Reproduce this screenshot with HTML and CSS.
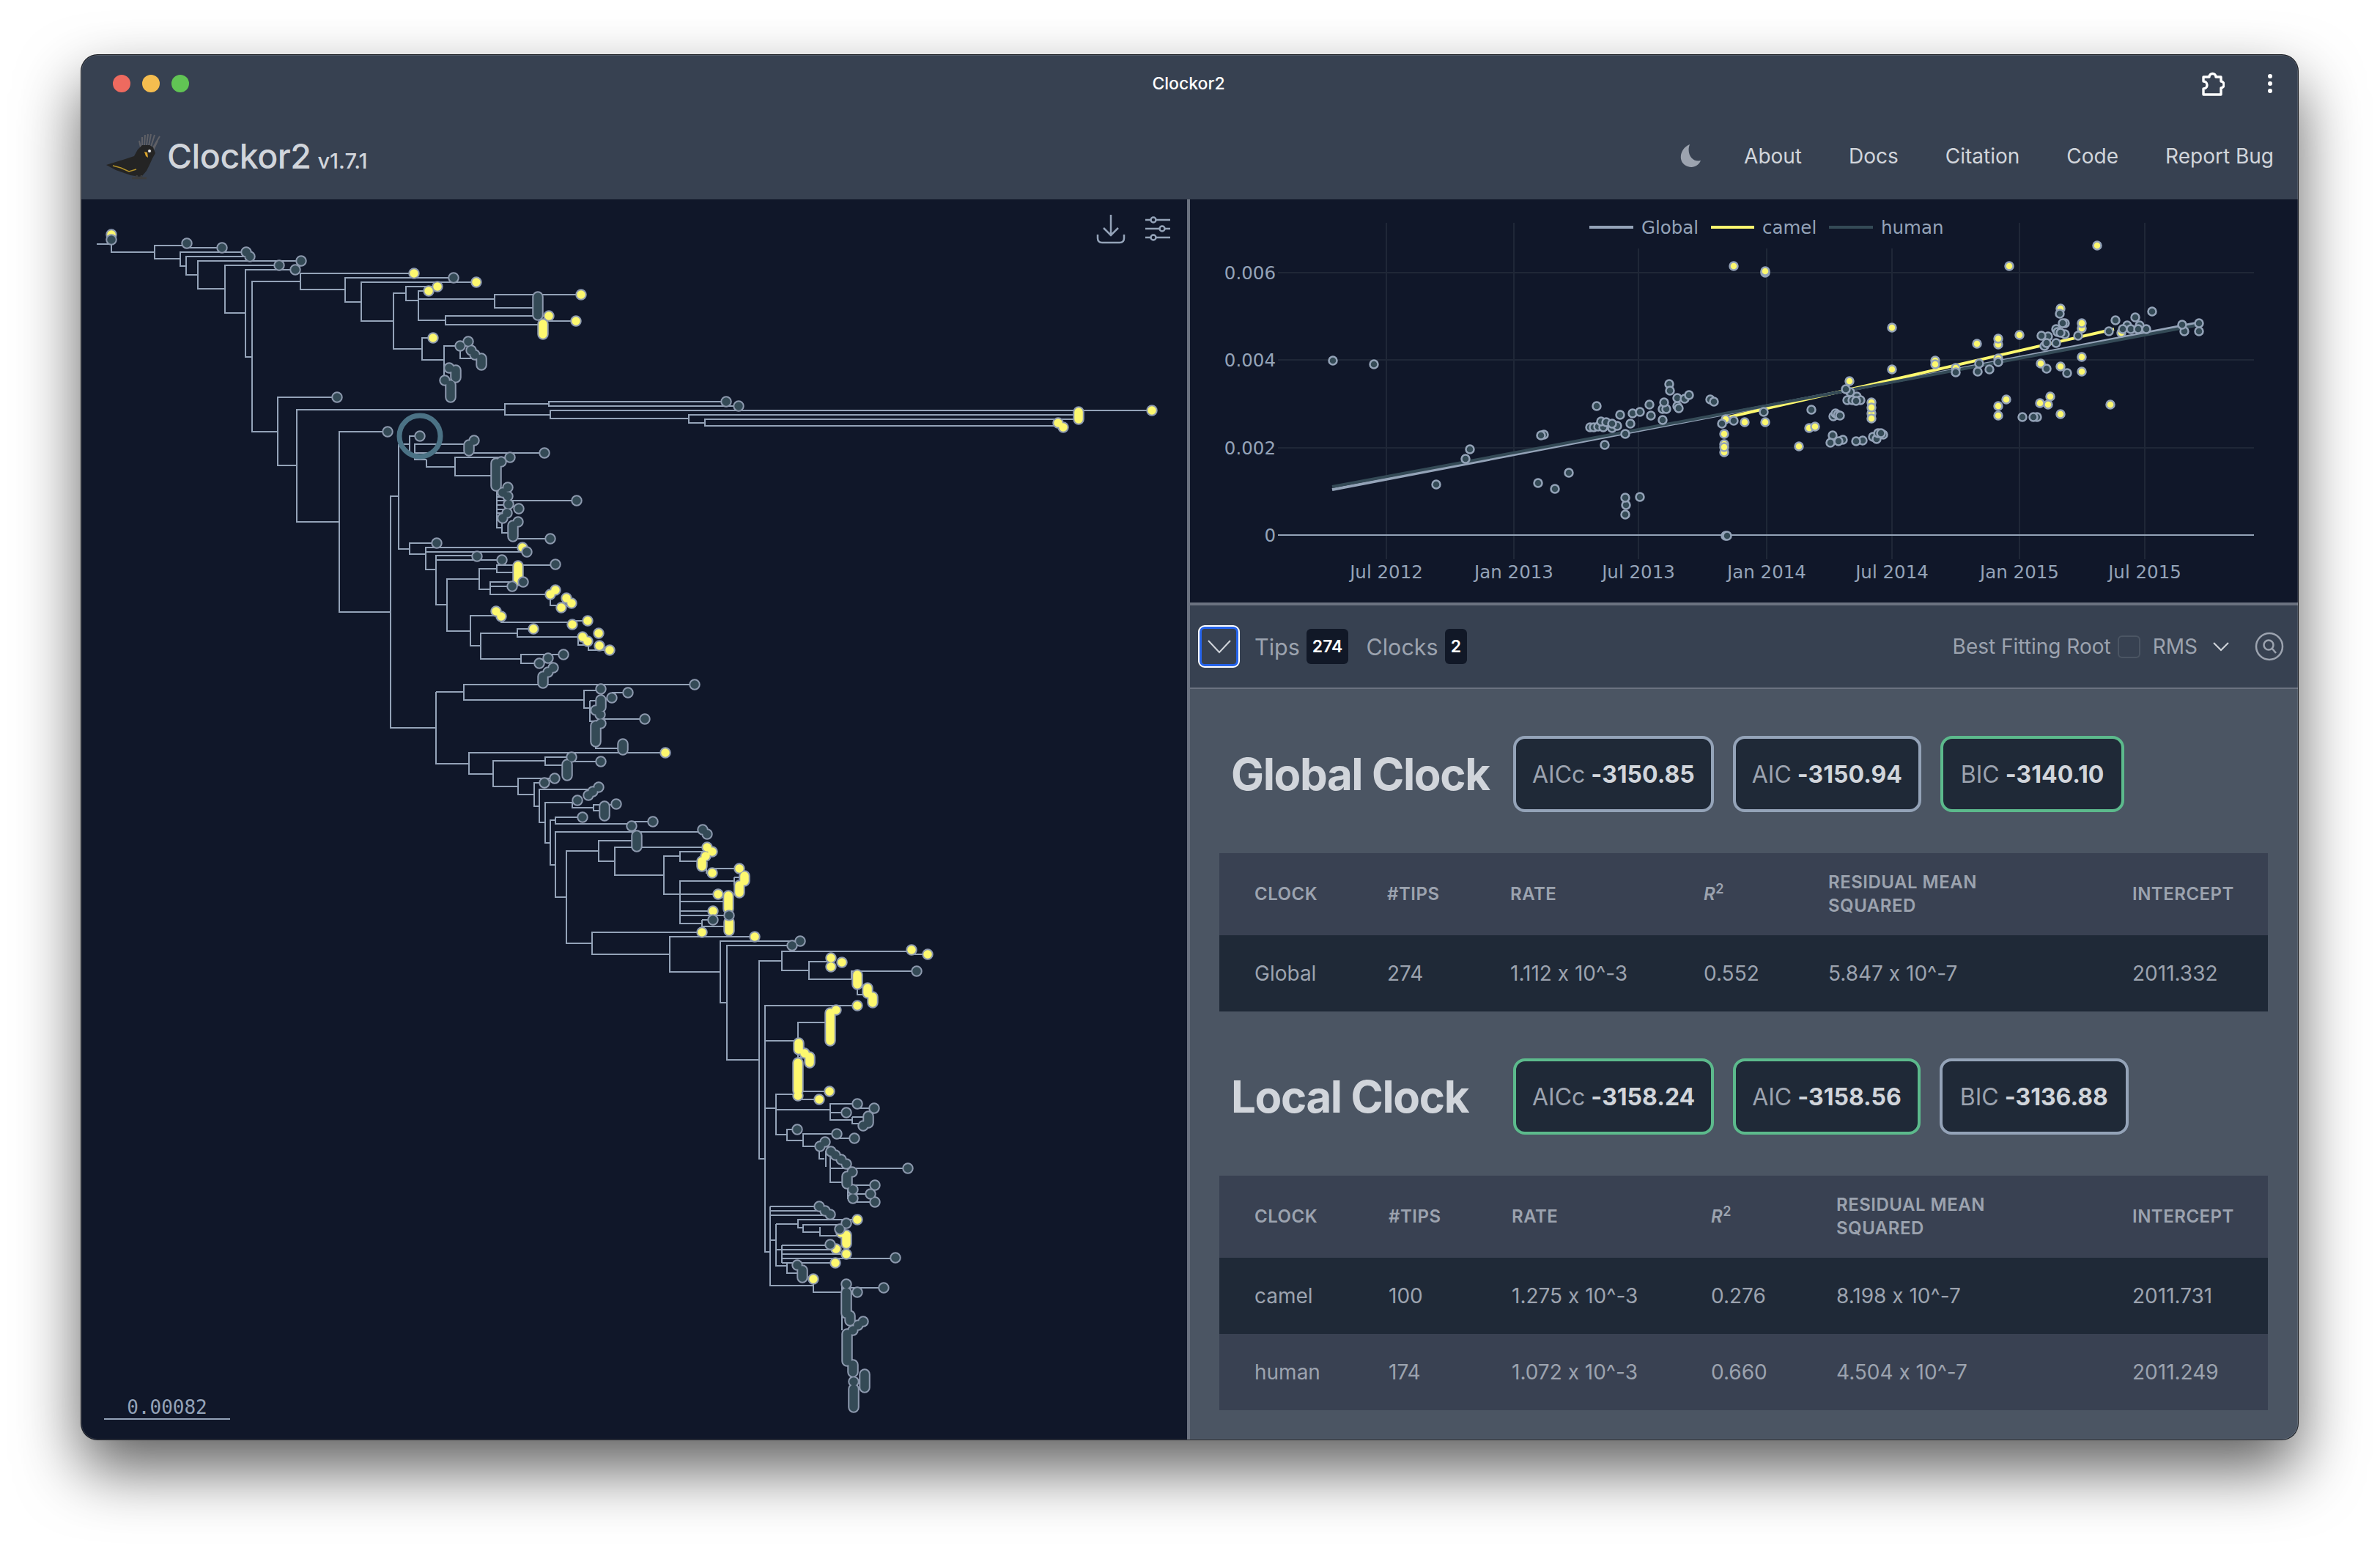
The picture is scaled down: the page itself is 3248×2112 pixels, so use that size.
FILE: index.html
```html
<!DOCTYPE html>
<html lang="en">
<head>
    <meta charset="UTF-8" />
    <title>Clockor2</title>
    <link rel="stylesheet" href="styles.css">
</head>
<body>

<div class="window">

    <div class="titlebar">
        <div class="lights">
            <span class="light red"></span>
            <span class="light amber"></span>
            <span class="light green"></span>
        </div>
        <div class="win-title">Clockor2</div>
        <div class="win-actions">
            <svg class="puzzle" width="32" height="36" viewBox="0 0 32 36">
                <path d="M3 9H11a4.500 4.500 0 0 1 9 0H27V15a4 4.500 0 0 1 0 9V33H3V25a5 5 0 0 0 0-10Z" />
            </svg>
            <div class="kebab"><span></span><span></span><span></span></div>
        </div>
    </div>

    <nav class="navbar">
        <div class="brand">
            <svg width="74" height="64" viewBox="145 180 74 64">
                <path class="bird-crest" d="M192 200L190 191M194 198L194 186M197 197L198 183M200 197L202 182M203 198L206 182M206 199L211 183M208 202L218 185M209 204L215 191" />
                <path class="bird-body" d="M145 224L171 216L183 212L188 203L194 197L204 197L209 200L212 208L208 215L204 224L200 232L194 239L190 240L178 238L158 231Z" />
                <path class="bird-feet" d="M180 242H200M187 238L186 242M193 238L193 242" />
                <path class="bird-wing" d="M154 225L165 228L176 233L186 230" />
                <path class="bird-beak" d="M197 206L201 207L202 214L199 212Z" />
                <circle class="bird-eye" cx="204" cy="205" r="2.500" />
            </svg>
            <span class="brand-name">Clockor2</span>
            <span class="brand-version">v1.7.1</span>
        </div>
        <div class="nav-links">
            <svg class="moon" width="32" height="32" viewBox="0 0 32 32">
                <path d="M16 0C3 5-2 24 13 30C21 33 28 29 31 22C20 25 11 13 16 0Z" />
            </svg>
            <a>About</a>
            <a>Docs</a>
            <a>Citation</a>
            <a>Code</a>
            <a>Report Bug</a>
        </div>
    </nav>

    <div class="panels">

        <div class="tree-panel">
            <svg class="tree" width="1508" height="1692" viewBox="112 272 1508 1692">
                <defs>
                    <path id="yellow-tips" d="M152 320h0M565 373h0M597 391h0M585 397h0M650 385h0M793 402h0M749 431h0M786 438h0M741 442V456M591 461h0M1572 560h0M1472 562V572M1444 577h0M1451 583h0M713 747h0M707 772V792M758 805h0M751 811h0M773 816h0M780 823h0M766 829h0M677 834h0M684 841h0M781 852h0M802 847h0M728 858h0M795 869h0M802 875h0M817 864h0M818 881h0M832 887h0M908 1027h0M965 1156h0M972 1162h0M963 1168h0M958 1175V1182M972 1191h0M1009 1185h0M1016 1195V1202M1009 1208V1218M980 1220h0M994 1222V1240M973 1243h0M995 1258V1270M958 1272h0M1030 1278h0M1244 1296h0M1266 1302h0M1134 1307h0M1134 1319h0M1149 1313h0M1170 1330V1343M1184 1348V1355M1191 1360V1368M1170 1372h0M1141 1378h0M1133 1382V1420M1090 1423V1432M1098 1437h0M1105 1442V1450M1089 1450V1488M1089 1495h0M1132 1489h0M1118 1500h0M1170 1664h0M1148 1682h0M1155 1685V1697M1141 1704h0M1155 1711h0M1140 1723h0M1110 1745h0" />
                    <path id="dark-tips" d="M152 327h0M255 332h0M303 338h0M336 344h0M341 350h0M411 356h0M381 362h0M403 368h0M619 379h0M734 405V430M628 472h0M639 466h0M643 478h0M648 484h0M657 489V498M613 502h0M622 505V515M607 519h0M615 525V542M460 542h0M991 548h0M1008 554h0M529 589h0M573 595h0M647 601h0M640 607V615M743 618h0M696 624h0M684 630h0M677 632V663M693 665h0M686 672h0M693 677h0M787 683h0M694 688h0M708 694h0M692 700h0M686 707h0M707 712h0M700 717V732M751 735h0M596 741h0M719 753h0M651 759h0M685 764h0M758 770h0M714 794h0M699 800h0M769 893h0M748 898h0M736 905h0M755 911h0M748 917h0M741 923V932M948 934h0M820 940h0M835 952h0M857 945h0M820 955V965M813 969h0M819 975h0M880 981h0M820 987h0M813 990V1012M850 1015V1023M780 1033h0M820 1039h0M774 1043V1058M757 1062h0M743 1068h0M817 1074h0M809 1080h0M803 1085h0M788 1092h0M841 1097h0M825 1100V1113M795 1115h0M891 1121h0M862 1127h0M959 1132h0M965 1138h0M869 1140V1155M995 1249h0M973 1255h0M1092 1284h0M1081 1290h0M1251 1325h0M1155 1518h0M1170 1506h0M1193 1512h0M1185 1523V1532M1178 1536h0M1088 1541h0M1142 1547h0M1166 1553h0M1126 1558h0M1119 1564h0M1134 1571h0M1140 1576h0M1148 1582h0M1155 1588h0M1239 1594h0M1163 1599h0M1156 1605V1615M1194 1617h0M1164 1623h0M1188 1629h0M1164 1635h0M1194 1640h0M1118 1646h0M1126 1652h0M1133 1657h0M1155 1669h0M1146 1677h0M1133 1698h0M1222 1716h0M1088 1726h0M1095 1733V1743M1155 1752h0M1206 1757h0M1170 1763h0M1155 1763V1792M1160 1795V1802M1178 1803h0M1171 1808h0M1164 1815h0M1156 1820V1857M1164 1862V1872M1180 1875V1893M1165 1885h0M1165 1895V1920" />
                </defs>

                <path class="branch" d="M132 333H152M152 320V344H211M255 335H211V353H246M255 338H303M330 344H246V363H254M335 350H254V375H270M411 356H270V394H307M381 362H307V427H335M403 368H335V487H344M410 384H344V589H379M565 373H410V395H471M619 379H471V412H493M650 385H493V438H537M554 400H537V476H576M597 391H554V410H571M585 397H571V437H608M571 408H675M793 402H675V420H734M749 431H608V443H741M786 438H749M591 461H576V491H606M628 472H606V522M628 472V489H657" />
                <path class="branch" d="M460 542H379V635H405M689 559H405V712H463M749 551H689V566H751M991 548H749V554H1008M1572 560H751V571H940M1472 566H940V577H962M1472 572H962V581H1440M529 589H463V835H533M544 677H533V993H595M573 595H559V616M544 606H559M544 606V749H559M642 606H566V627H582M743 618H566M582 627V637H621M696 624H621V649H677M678 663V720H685M678 678H687M678 689H687M678 695H687M678 700H687M685 700V727H700M787 683H678M751 735H700" />
                <path class="branch" d="M596 741H559V756H581M714 747H581V777H595M719 753H581M651 758H595V825H610M685 764H595M654 790H610V861H642M678 776H654V804H669M758 771H678V781H707M714 794H669V811H751M699 800H669M751 811V826H765M677 840H642V881H656M684 841V849H781M781 847H802M706 864H656V899H711M728 858H706V869H789M789 869V880H803V887H832M769 893H711V905H736" />
                <path class="branch" d="M948 934H633V955H797M595 944H633M595 944V1042H640M820 942H797V966H805M857 945H835M805 956V984H813M805 956H820M880 981H819M813 990V1021H850M908 1027H640V1056H673M744 1038H673V1073H707M780 1033H744V1044H774M820 1039H780M757 1062H707V1084H729M743 1068H729V1100H736M806 1077H736V1122H744M781 1095H744V1150H751M781 1095V1102H810M841 1098H810V1106H825M758 1119H751V1180H758M795 1115H758V1124H862M891 1121H862M959 1135H758V1224H773M817 1161H773V1287H808M869 1147H817V1175H839M965 1156H839V1194H906M928 1168H906V1220H928M972 1162H928V1175H958M964 1180V1191H972M1009 1185H972M1002 1202H928V1260H958M1002 1197V1208M1016 1197H1002M1009 1208H1002M980 1220H928M994 1230H928M973 1243H929M995 1249H929M958 1255V1264H995M973 1255H958" />
                <path class="branch" d="M958 1272H808V1302H914M1030 1278H914V1326H983M1092 1284H983V1368H992M1081 1290H992V1446H1036M1067 1311H1036V1581H1043M1244 1298H1067V1324H1104M1266 1302H1244M1134 1312H1104V1336H1162M1251 1325H1162V1336M1170 1343V1357H1185M1170 1372H1044V1708H1051M1044 1420H1089V1395H1133M1089 1432V1443H1105M1044 1512H1059M1089 1493H1059V1548H1074M1132 1489H1089M1118 1500H1089M1133 1514H1059M1170 1506H1133V1528H1163M1193 1512H1170M1155 1518H1133M1163 1524V1533H1178M1163 1524H1185M1088 1541H1074V1556H1096M1142 1547H1096V1564H1119M1166 1553H1142M1118 1564V1581H1125M1127 1570V1592M1133 1571V1613H1157M1239 1594H1133M1157 1613V1635H1164M1194 1617H1164M1188 1629H1164M1194 1640H1164M1164 1617V1640" />
                <path class="branch" d="M1118 1646H1051M1126 1652H1051M1133 1658H1051M1051 1646V1754H1110M1170 1664H1089V1675H1096M1059 1670H1089M1059 1670V1727H1074M1051 1692H1059M1146 1671H1096V1681H1119M1119 1674V1686H1155M1067 1699V1723M1133 1699H1067M1141 1705H1059M1155 1711H1067M1222 1717H1067M1140 1723H1067M1089 1723H1074V1737H1096M1110 1746V1763H1149M1149 1752V1815M1206 1757H1155" />

                <use href="#yellow-tips" class="tip-edge" />
                <use href="#yellow-tips" class="tip-yellow" />
                <use href="#dark-tips" class="tip-edge" />
                <use href="#dark-tips" class="tip-dark" />

                <circle class="root-ring" cx="573" cy="595" r="28" />

                <!-- download and settings -->
                <path class="tool-icon" d="M1516 293V322M1506 311L1516 321L1526 311M1498 320V325Q1498 331 1504 331H1528Q1534 331 1534 325V320" />
                <path class="tool-icon" d="M1563 300H1597M1563 312H1597M1563 324H1597" />
                <circle class="tool-knob" cx="1574" cy="300" r="3.500" />
                <circle class="tool-knob" cx="1586" cy="312" r="3.500" />
                <circle class="tool-knob" cx="1574" cy="324" r="3.500" />

                <text class="scale-label" x="228" y="1929" text-anchor="middle">0.00082</text>
                <path class="branch" d="M142 1936H314" />
            </svg>
        </div>

        <div class="side">

            <div class="plot">
                <svg width="1512" height="550" viewBox="1624 272 1512 550">
                    <path class="grid" d="M1744 372H3076M1744 491H3076M1744 611H3076" />
                    <path class="grid" d="M1892 304V763M2066 304V763M2236 339V763M2411 339V763M2582 339V763M2756 304V763M2927 304V763" />
                    <path class="zero" d="M1744 730H3076" />

                    <text class="axis" x="1741" y="381" text-anchor="end">0.006</text>
                    <text class="axis" x="1741" y="500" text-anchor="end">0.004</text>
                    <text class="axis" x="1741" y="620" text-anchor="end">0.002</text>
                    <text class="axis" x="1741" y="739" text-anchor="end">0</text>
                    <text class="axis" x="1892" y="789" text-anchor="middle">Jul 2012</text>
                    <text class="axis" x="2066" y="789" text-anchor="middle">Jan 2013</text>
                    <text class="axis" x="2236" y="789" text-anchor="middle">Jul 2013</text>
                    <text class="axis" x="2411" y="789" text-anchor="middle">Jan 2014</text>
                    <text class="axis" x="2582" y="789" text-anchor="middle">Jul 2014</text>
                    <text class="axis" x="2756" y="789" text-anchor="middle">Jan 2015</text>
                    <text class="axis" x="2927" y="789" text-anchor="middle">Jul 2015</text>

                    <path class="fit fit-global" d="M2169 310H2229M1818 668L2997 441" />
                    <path class="fit fit-camel" d="M2335 310H2394M2355 570L2885 449" />
                    <path class="fit fit-human" d="M2496 310H2556M1818 664L2997 444" />
                    <text class="axis" x="2240" y="319">Global</text>
                    <text class="axis" x="2405" y="319">camel</text>
                    <text class="axis" x="2567" y="319">human</text>

                    <g class="pts-yellow">
                        <circle cx="2366" cy="363"/><circle cx="2409" cy="372"/><circle cx="2409" cy="370"/><circle cx="2381" cy="576"/><circle cx="2409" cy="576"/><circle cx="2355" cy="572"/><circle cx="2353" cy="617"/><circle cx="2353" cy="606"/><circle cx="2353" cy="610"/><circle cx="2353" cy="592"/>
                        <circle cx="2862" cy="335"/><circle cx="2742" cy="363"/><circle cx="2582" cy="447"/><circle cx="2582" cy="504"/><circle cx="2524" cy="520"/><circle cx="2698" cy="469"/><circle cx="2727" cy="470"/><circle cx="2727" cy="462"/><circle cx="2756" cy="457"/><circle cx="2812" cy="421"/><circle cx="2841" cy="448"/><circle cx="2841" cy="441"/><circle cx="2841" cy="487"/><circle cx="2841" cy="507"/><circle cx="2641" cy="492"/><circle cx="2641" cy="497"/><circle cx="2669" cy="502"/><circle cx="2727" cy="489"/><circle cx="2785" cy="496"/><circle cx="2812" cy="500"/><circle cx="2738" cy="545"/><circle cx="2727" cy="554"/><circle cx="2727" cy="567"/><circle cx="2784" cy="550"/><circle cx="2798" cy="541"/><circle cx="2795" cy="552"/><circle cx="2812" cy="565"/><circle cx="2880" cy="552"/><circle cx="2554" cy="549"/><circle cx="2554" cy="564"/><circle cx="2554" cy="556"/><circle cx="2554" cy="571"/><circle cx="2469" cy="584"/><circle cx="2477" cy="582"/><circle cx="2455" cy="609"/><circle cx="2895" cy="454"/>
                    </g>
                    <g class="pts-dark">
                        <circle cx="1819" cy="492"/><circle cx="1875" cy="497"/><circle cx="1960" cy="661"/><circle cx="2000" cy="626"/><circle cx="2006" cy="613"/><circle cx="2107" cy="593"/><circle cx="2103" cy="594"/><circle cx="2099" cy="659"/><circle cx="2122" cy="667"/><circle cx="2141" cy="645"/><circle cx="2179" cy="554"/><circle cx="2190" cy="607"/><circle cx="2218" cy="592"/><circle cx="2218" cy="702"/><circle cx="2219" cy="689"/><circle cx="2218" cy="679"/><circle cx="2238" cy="678"/><circle cx="2170" cy="583"/><circle cx="2175" cy="583"/><circle cx="2181" cy="582"/><circle cx="2188" cy="583"/><circle cx="2185" cy="575"/><circle cx="2200" cy="584"/><circle cx="2207" cy="581"/><circle cx="2192" cy="576"/><circle cx="2200" cy="578"/><circle cx="2211" cy="566"/><circle cx="2225" cy="578"/><circle cx="2228" cy="564"/><circle cx="2238" cy="562"/><circle cx="2253" cy="567"/><circle cx="2251" cy="552"/><circle cx="2269" cy="573"/><circle cx="2269" cy="558"/><circle cx="2274" cy="558"/><circle cx="2271" cy="549"/><circle cx="2278" cy="524"/><circle cx="2279" cy="533"/><circle cx="2289" cy="554"/><circle cx="2291" cy="557"/><circle cx="2289" cy="543"/><circle cx="2299" cy="544"/><circle cx="2305" cy="539"/><circle cx="2334" cy="545"/><circle cx="2339" cy="548"/><circle cx="2350" cy="578"/><circle cx="2366" cy="574"/><circle cx="2407" cy="562"/><circle cx="2355" cy="731"/><circle cx="2357" cy="731"/>
                        <circle cx="2472" cy="559"/><circle cx="2525" cy="535"/><circle cx="2534" cy="541"/><circle cx="2521" cy="546"/><circle cx="2539" cy="546"/><circle cx="2528" cy="546"/><circle cx="2533" cy="547"/><circle cx="2519" cy="531"/><circle cx="2502" cy="568"/><circle cx="2505" cy="564"/><circle cx="2508" cy="566"/><circle cx="2511" cy="567"/><circle cx="2501" cy="594"/><circle cx="2498" cy="604"/><circle cx="2515" cy="600"/><circle cx="2509" cy="602"/><circle cx="2542" cy="601"/><circle cx="2533" cy="602"/><circle cx="2556" cy="596"/><circle cx="2561" cy="599"/><circle cx="2570" cy="593"/><circle cx="2563" cy="591"/><circle cx="2567" cy="591"/><circle cx="2669" cy="508"/><circle cx="2699" cy="507"/><circle cx="2715" cy="504"/><circle cx="2727" cy="494"/><circle cx="2701" cy="496"/><circle cx="2780" cy="569"/><circle cx="2760" cy="569"/><circle cx="2775" cy="569"/><circle cx="2793" cy="503"/><circle cx="2821" cy="509"/>
                        <circle cx="2818" cy="441"/><circle cx="2815" cy="441"/><circle cx="2806" cy="449"/><circle cx="2818" cy="456"/><circle cx="2808" cy="453"/><circle cx="2812" cy="454"/><circle cx="2795" cy="459"/><circle cx="2786" cy="458"/><circle cx="2790" cy="472"/><circle cx="2793" cy="468"/><circle cx="2806" cy="468"/><circle cx="2811" cy="428"/><circle cx="2836" cy="458"/><circle cx="2887" cy="437"/><circle cx="2878" cy="452"/><circle cx="2903" cy="444"/><circle cx="2920" cy="444"/><circle cx="2897" cy="449"/><circle cx="2908" cy="449"/><circle cx="2918" cy="449"/><circle cx="2929" cy="449"/><circle cx="2914" cy="433"/><circle cx="2937" cy="425"/><circle cx="2981" cy="452"/><circle cx="2978" cy="443"/><circle cx="3001" cy="452"/><circle cx="3001" cy="441"/>
                    </g>
                </svg>
            </div>

            <div class="toolbar">
                <div class="tool-group">
                    <button class="collapse">
                        <svg width="34" height="20" viewBox="0 0 34 20"><path d="M2 2L17 18L32 2" /></svg>
                    </button>
                    <span class="stat">Tips</span>
                    <span class="badge">274</span>
                    <span class="stat stat-next">Clocks</span>
                    <span class="badge">2</span>
                </div>
                <div class="tool-group tool-right">
                    <span class="root-label">Best Fitting Root</span>
                    <span class="checkbox"></span>
                    <span class="root-label rms">RMS</span>
                    <svg class="rms-arrow" width="24" height="14" viewBox="0 0 24 14"><path d="M2 2L12 12L22 2" /></svg>
                    <svg class="search" width="40" height="40" viewBox="0 0 40 40">
                        <circle cx="20" cy="20" r="18" />
                        <circle cx="19" cy="18" r="6.500" />
                        <path d="M24 23L29 29" />
                    </svg>
                </div>
            </div>

            <div class="fits">
                <div class="fit-head">
                    <h2>Global Clock</h2>
                    <div class="score"><span>AICc</span> <b>-3150.85</b></div>
                    <div class="score"><span>AIC</span> <b>-3150.94</b></div>
                    <div class="score best"><span>BIC</span> <b>-3140.10</b></div>
                </div>
                <table class="fit-table global-table">
                    <colgroup><col><col><col><col><col><col></colgroup>
                    <thead>
                        <tr><th>Clock</th><th>#Tips</th><th>Rate</th><th><i>R</i><sup>2</sup></th><th>Residual Mean<br>Squared</th><th>Intercept</th></tr>
                    </thead>
                    <tbody>
                        <tr class="row-dark"><td>Global</td><td>274</td><td>1.112 x 10^-3</td><td>0.552</td><td>5.847 x 10^-7</td><td>2011.332</td></tr>
                    </tbody>
                </table>

                <div class="fit-head local-head">
                    <h2>Local Clock</h2>
                    <div class="score best"><span>AICc</span> <b>-3158.24</b></div>
                    <div class="score best"><span>AIC</span> <b>-3158.56</b></div>
                    <div class="score"><span>BIC</span> <b>-3136.88</b></div>
                </div>
                <table class="fit-table local-table">
                    <colgroup><col><col><col><col><col><col></colgroup>
                    <thead>
                        <tr><th>Clock</th><th>#Tips</th><th>Rate</th><th><i>R</i><sup>2</sup></th><th>Residual Mean<br>Squared</th><th>Intercept</th></tr>
                    </thead>
                    <tbody>
                        <tr class="row-dark"><td>camel</td><td>100</td><td>1.275 x 10^-3</td><td>0.276</td><td>8.198 x 10^-7</td><td>2011.731</td></tr>
                        <tr class="row-mid"><td>human</td><td>174</td><td>1.072 x 10^-3</td><td>0.660</td><td>4.504 x 10^-7</td><td>2011.249</td></tr>
                    </tbody>
                </table>
            </div>

        </div>
    </div>
</div>

</body>
</html>
```

FILE: styles.css
```css
* {
    box-sizing: border-box;
}

body {
    margin: 0;
    padding: 75px 112px 148px 111px;
    background-color: #ffffff;
    font-family: Inter, "Liberation Sans", sans-serif;
    font-feature-settings: "calt" 0;
    color: #d1d5db;
}

.window {
    position: relative;
    width: 3025px;
    height: 1889px;
    border-radius: 22px;
    overflow: hidden;
    background-color: #374151;
    box-shadow: 0 0 0 1px #1b1d22, 0 40px 85px rgba(0, 0, 0, 0.63);
}

.window::after {
    content: "";
    position: absolute;
    inset: 0;
    border: 1px solid rgba(255, 255, 255, 0.12);
    border-radius: 22px;
    pointer-events: none;
}

/* title bar */
.titlebar {
    height: 78px;
    padding: 0 46px 0 43px;
    display: grid;
    grid-template-columns: 1fr auto 1fr;
    align-items: center;
}

.lights {
    display: flex;
    gap: 16px;
}

.light {
    width: 24px;
    height: 24px;
    border-radius: 50%;
}

.red { background-color: #ee6a5f; }
.amber { background-color: #f5bd4f; }
.green { background-color: #61c454; }

.win-title {
    font-size: 23px;
    font-weight: 500;
    color: #ffffff;
}

.win-actions {
    margin-right: -11px;
    display: flex;
    justify-content: flex-end;
    align-items: center;
    gap: 59px;
}

.puzzle path {
    fill: none;
    stroke: #ffffff;
    stroke-width: 3.4;
    stroke-linejoin: round;
}

.kebab {
    display: flex;
    flex-direction: column;
    gap: 4px;
    width: 6px;
}

.kebab span {
    width: 6px;
    height: 6px;
    border-radius: 50%;
    background-color: #ffffff;
}

/* nav */
.navbar {
    height: 119px;
    padding: 0 33px 0 34px;
    display: flex;
    justify-content: space-between;
    align-items: center;
}

.brand {
    display: flex;
    align-items: baseline;
    position: relative;
}

.brand svg {
    align-self: center;
    margin-right: 9px;
}

.brand-name {
    padding-top: 4px;
    font-size: 46.500px;
    font-weight: 500;
    letter-spacing: -0.5px;
    color: #d1d5db;
}

.brand-version {
    font-size: 29px;
    font-weight: 500;
    margin-left: 9px;
    color: #d1d5db;
}

.bird-crest {
    fill: none;
    stroke: #5f6066;
    stroke-width: 2;
}

.bird-body { fill: #242424; }
.bird-feet { fill: none; stroke: #3d3d3d; stroke-width: 2.500; }
.bird-wing { fill: none; stroke: #b4932b; stroke-width: 1.600; }
.bird-beak { fill: #d9a32c; }
.bird-eye { fill: #eeeeee; stroke: #222222; stroke-width: 1; }

.nav-links {
    display: flex;
    align-items: center;
    gap: 64px;
    font-size: 28px;
    color: #d1d5db;
}

.moon {
    margin-right: -6px;
}

.moon path {
    fill: #9ca3af;
}

/* main layout */
.panels {
    display: flex;
    height: 1692px;
}

.tree-panel {
    flex: 0 0 1509px;
    background-color: #101729;
}

.tree {
    display: block;
    margin-left: 1px;
}

.branch {
    fill: none;
    stroke: #94a3b8;
    stroke-width: 2;
}

.tip-edge,
.tip-yellow,
.tip-dark {
    fill: none;
    stroke-linecap: round;
}

.tip-edge {
    stroke: #8d99ae;
    stroke-width: 15.500;
}

.tip-yellow {
    stroke: #fdf86f;
    stroke-width: 11.500;
}

.tip-dark {
    stroke: #344a56;
    stroke-width: 11.500;
}

.root-ring {
    fill: none;
    stroke: #4b7285;
    stroke-width: 7;
}

.tool-icon {
    fill: none;
    stroke: #94a3b8;
    stroke-width: 2.500;
}

.tool-knob {
    fill: #101729;
    stroke: #94a3b8;
    stroke-width: 2.500;
}

.scale-label {
    font-family: "DejaVu Sans Mono", monospace;
    font-size: 26px;
    fill: #94a3b8;
}

/* right column */
.side {
    flex: 1;
    display: flex;
    flex-direction: column;
    border-left: 4px solid #6b7280;
    background-color: #4b5563;
}

.plot {
    height: 550px;
    background-color: #101729;
}

.plot svg {
    display: block;
}

.grid {
    fill: none;
    stroke: #1f2737;
    stroke-width: 2;
}

.zero {
    fill: none;
    stroke: #94a3b8;
    stroke-width: 2;
}

.axis {
    font-family: "DejaVu Sans", sans-serif;
    font-size: 24.500px;
    fill: #94a3b8;
}

.fit {
    fill: none;
    stroke-width: 4;
}

.fit-global { stroke: #94a3b8; }
.fit-camel { stroke: #fdf86f; }
.fit-human { stroke: #344a56; }

.pts-yellow circle,
.pts-dark circle {
    r: 5.500px;
    stroke: #94a3b8;
    stroke-width: 2.500;
}

.pts-yellow circle { fill: #fdf86f; }
.pts-dark circle { fill: #344a56; }

.toolbar {
    height: 118px;
    padding: 0 19px 0 12px;
    display: flex;
    justify-content: space-between;
    align-items: center;
    background-color: #374151;
    border-top: 4px solid #6b7280;
    border-bottom: 2px solid #6b7280;
}

.tool-group {
    display: flex;
    align-items: center;
}

.collapse {
    width: 55px;
    height: 56px;
    padding: 0;
    display: flex;
    justify-content: center;
    align-items: center;
    background-color: #374151;
    border: 4px solid #2563eb;
    border-radius: 8px;
    outline: 2px solid #ffffff;
    outline-offset: -1px;
    margin-right: 21px;
}

.collapse path,
.rms-arrow path {
    fill: none;
    stroke: #d1d5db;
    stroke-width: 2;
}

.stat {
    font-size: 30.500px;
    color: #9ca3af;
    margin-right: 9px;
}

.stat-next {
    margin-left: 24px;
}

.badge {
    height: 48px;
    padding: 0 8px;
    display: flex;
    align-items: center;
    background-color: #111827;
    border-radius: 6px;
    font-size: 23px;
    font-weight: 600;
    color: #ffffff;
}

.root-label {
    font-size: 28px;
    color: #9ca3af;
}

.checkbox {
    width: 31px;
    height: 31px;
    margin: 0 17px 0 9px;
    background-color: #374151;
    border: 2px solid #4b5563;
    border-radius: 6px;
}

.rms-arrow {
    margin: 0 34px 0 20px;
}

.search circle,
.search path {
    fill: none;
    stroke: #9ca3af;
    stroke-width: 2.500;
}

.fits {
    padding: 64px 41px 0 40px;
}

.fit-head {
    display: flex;
    align-items: center;
    gap: 26px;
    height: 104px;
    margin-bottom: 56px;
}

.local-head {
    margin-top: 64px;
}

.fit-head h2 {
    flex: 0 0 359px;
    margin: 0 0 0 16px;
    font-size: 60px;
    font-weight: 700;
    letter-spacing: -1.400px;
    color: #d1d5db;
}

.score {
    height: 104px;
    padding: 0 22px;
    display: flex;
    align-items: center;
    gap: 8px;
    background-color: #1f2937;
    border: 4px solid #94a3b8;
    border-radius: 16px;
    font-size: 32px;
    white-space: nowrap;
}

.score:last-child {
    padding: 0 24px;
}

.score span {
    color: #9ca3af;
}

.score b {
    font-weight: 700;
    color: #d1d5db;
}

.score.best {
    border-color: #5cba8c;
}

.fit-table {
    width: 1431px;
    border-collapse: collapse;
    table-layout: fixed;
}

.global-table col:nth-child(1) { width: 181px; }
.global-table col:nth-child(2) { width: 168px; }
.global-table col:nth-child(3) { width: 264px; }
.global-table col:nth-child(4) { width: 170px; }
.global-table col:nth-child(5) { width: 415px; }
.global-table col:nth-child(6) { width: 233px; }

.local-table col:nth-child(1) { width: 183px; }
.local-table col:nth-child(2) { width: 168px; }
.local-table col:nth-child(3) { width: 272px; }
.local-table col:nth-child(4) { width: 171px; }
.local-table col:nth-child(5) { width: 404px; }
.local-table col:nth-child(6) { width: 233px; }

.fit-table th {
    height: 112px;
    padding: 0 0 0 48px;
    background-color: #394152;
    text-align: left;
    font-size: 24px;
    font-weight: 600;
    line-height: 32px;
    letter-spacing: 0.500px;
    text-transform: uppercase;
    color: #9ca3af;
}

.fit-table th i {
    text-transform: none;
}

.fit-table th sup {
    font-size: 18px;
    line-height: 0;
}

.fit-table td {
    height: 104px;
    padding: 0 0 0 48px;
    font-size: 28px;
    color: #9ca3af;
}

.row-dark { background-color: #1f2937; }
.row-mid { background-color: #394152; }
```
